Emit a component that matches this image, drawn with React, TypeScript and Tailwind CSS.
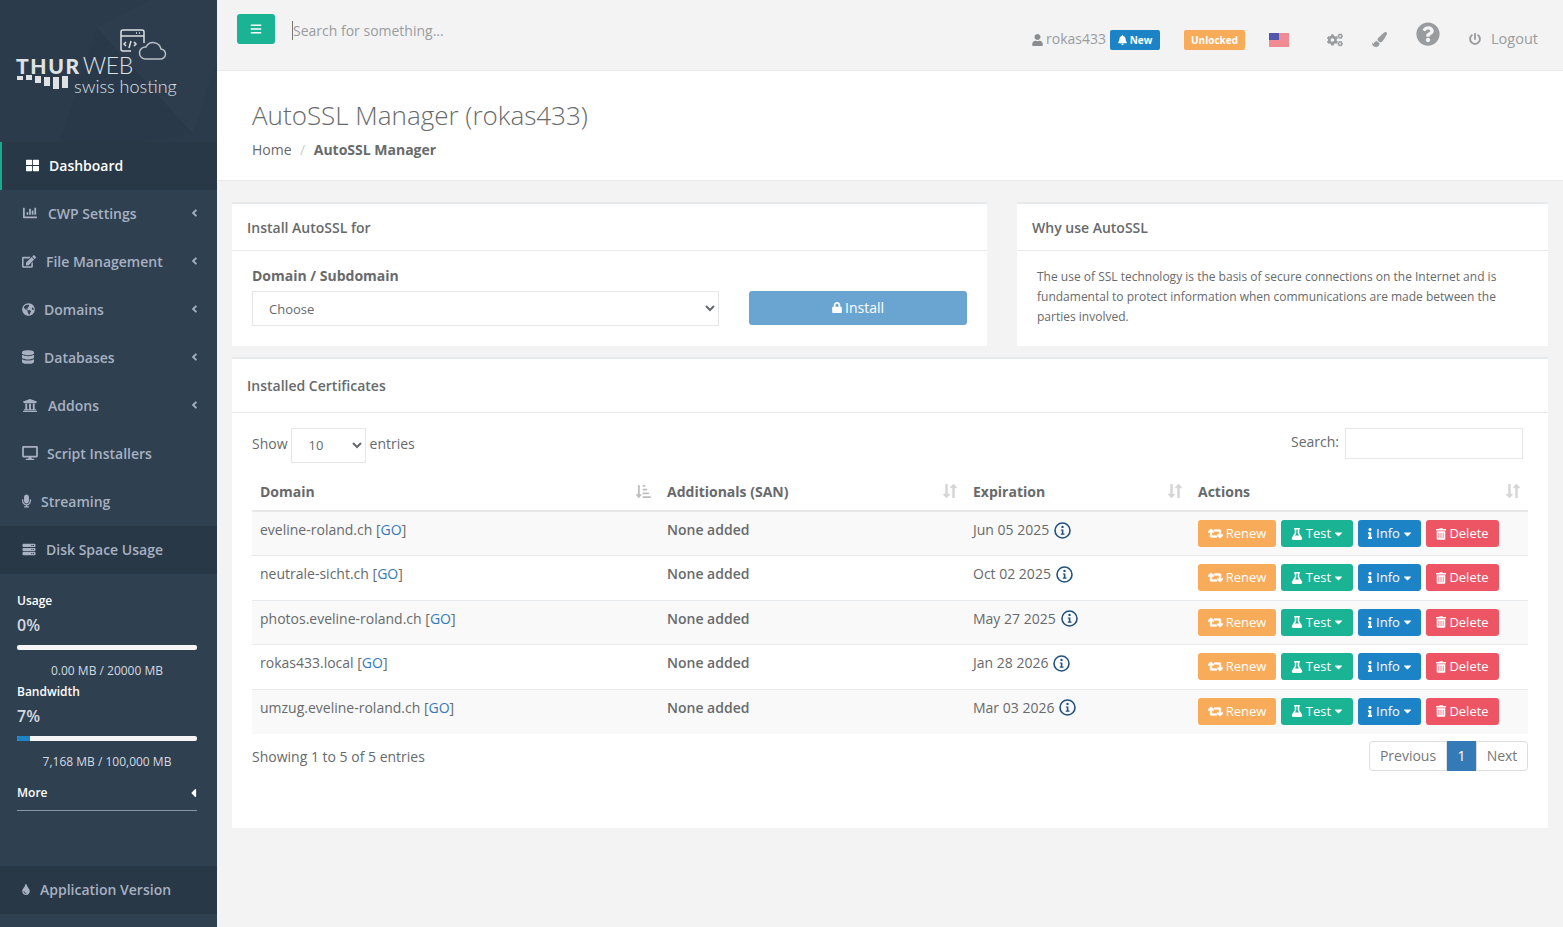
import {
  FaAngleLeft, FaBars, FaBell, FaChartBar, FaCogs, FaDatabase, FaDesktop, FaEdit, FaFlask, FaGlobeAmericas,
  FaInfo, FaLock, FaLongArrowAltDown, FaLongArrowAltUp, FaMicrophone, FaPaintBrush, FaPowerOff, FaQuestionCircle,
  FaRetweet, FaServer, FaSortAmountDownAlt, FaThLarge, FaTint, FaTrashAlt, FaUniversity, FaUser, FaCaretDown, FaCaretLeft,
} from "react-icons/fa";

const menu = [
  { label: "CWP Settings", icon: FaChartBar, size: "w-[16px] h-[14px]", gap: "gap-[10px]", arrow: true },
  { label: "File Management", icon: FaEdit, size: "w-[14px] h-[13px]", gap: "gap-[10px]", arrow: true },
  { label: "Domains", icon: FaGlobeAmericas, size: "w-[13px] h-[13px]", gap: "gap-[9px]", arrow: true },
  { label: "Databases", icon: FaDatabase, size: "w-[12px] h-[14px]", gap: "gap-[10px]", arrow: true },
  { label: "Addons", icon: FaUniversity, size: "w-[16px] h-[15px]", gap: "gap-[10px]", arrow: true },
  { label: "Script Installers", icon: FaDesktop, size: "w-[16px] h-[14px]", gap: "gap-[9px]", arrow: false },
  { label: "Streaming", icon: FaMicrophone, size: "w-[9px] h-[14px]", gap: "gap-[10px]", arrow: false },
];

const rows = [
  { domain: "eveline-roland.ch", expires: "Jun 05 2025" },
  { domain: "neutrale-sicht.ch", expires: "Oct 02 2025" },
  { domain: "photos.eveline-roland.ch", expires: "May 27 2025" },
  { domain: "rokas433.local", expires: "Jan 28 2026" },
  { domain: "umzug.eveline-roland.ch", expires: "Mar 03 2026" },
];

function Logo() {
  return (
    <div className="relative h-[142px] bg-[#2b3b4b] overflow-hidden shrink-0">
      <svg className="absolute inset-0" width="217" height="142" viewBox="0 0 217 142">
        <path d="M97 28L150 0H217V60L193 134L140 100Z" fill="#2d3d4d" />
        <path d="M97 28L193 134L140 142H60Z" fill="#293949" />
      </svg>
      <svg className="absolute left-[119px] top-[29px]" width="50" height="33" viewBox="0 0 50 33" fill="none" stroke="#dcdfe2" strokeWidth="1.5">
        <path d="M12 22H4a2 2 0 0 1-2-2V3a2 2 0 0 1 2-2h19a2 2 0 0 1 2 2v11" />
        <path d="M2 7h23" />
        <path d="M17 4h1M20 4h1M23 4h0" />
        <path d="M7 13l-2 2 2 2M15 13l2 2-2 2M12 12l-2 7" />
        <path d="M26 30h15a5 5 0 0 0 1-10 8 8 0 0 0-15-2 6 6 0 0 0-1 12z" stroke="#b9bfc5" />
      </svg>
      <div className="absolute left-[16px] top-[51px] flex items-baseline font-['Lato',sans-serif] leading-[28px]">
        <span className="text-[21px] font-black text-[#dfe2e5] tracking-[1.6px]">THUR</span>
        <span className="ml-[2px] text-[23px] font-light text-[#dfe2e5] tracking-[-0.3px]">WEB</span>
      </div>
      <div className="absolute left-[17px] top-[76px] flex items-start gap-[3px]">
        <i className="block w-[6px] h-[4px] bg-[#dfe2e5]" />
        <i className="block w-[6px] h-[5px] bg-[#dfe2e5] mt-[-1px]" />
        <i className="block w-[6px] h-[7px] bg-[#dfe2e5]" />
        <i className="block w-[6px] h-[9px] bg-[#dfe2e5] mt-[1px]" />
        <i className="block w-[6px] h-[12px] bg-[#dfe2e5] mt-[1px]" />
        <i className="block w-[6px] h-[12px] bg-[#dfe2e5]" />
      </div>
      <div className="absolute left-[74px] top-[74px] text-[18px] leading-[24px] font-light text-[#dfe2e5] font-['Lato',sans-serif]">swiss hosting</div>
    </div>
  );
}

function Sidebar() {
  return (
    <aside className="w-[217px] shrink-0 bg-[#2f4050] flex flex-col h-[927px] font-semibold text-[14px] text-[#a7b1c2]">
      <Logo />
      <div className="h-[48px] pb-[2px] bg-[#293846] border-l-[2px] border-[#19aa8d] flex items-center gap-[10px] pl-[24px] text-white">
        <FaThLarge className="w-[13px] h-[13px]" />
        <span>Dashboard</span>
      </div>
      {menu.map((m) => (
        <div key={m.label} className={`h-[48px] pb-[2px] flex items-center pl-[22px] pr-[19px] ${m.gap}`}>
          <m.icon className={`${m.size} shrink-0`} />
          <span className="flex-1">{m.label}</span>
          {m.arrow && <FaAngleLeft className="w-[7px] h-[12px]" />}
        </div>
      ))}
      <div className="h-[48px] pb-[2px] bg-[#293846] flex items-center gap-[10px] pl-[22px]">
        <FaServer className="w-[14px] h-[13px]" />
        <span>Disk Space Usage</span>
      </div>
      <div className="pl-[17px] pr-[20px] pt-[18px] flex-1 text-[12px] font-normal text-[#d5dae1]">
        <div className="text-white font-semibold leading-[17px]">Usage</div>
        <div className="mt-[5px] text-[16px] font-semibold leading-[22px] text-[#d5dae1]">0%</div>
        <div className="mt-[9px] h-[5px] rounded-[2px] bg-[#f5f5f5]" />
        <div className="mt-[12px] text-center leading-[17px]">0.00 MB / 20000 MB</div>
        <div className="mt-[4px] text-white font-semibold leading-[17px]">Bandwidth</div>
        <div className="mt-[5px] text-[16px] font-semibold leading-[22px]">7%</div>
        <div className="mt-[9px] h-[5px] rounded-[2px] bg-[#f5f5f5] overflow-hidden">
          <div className="h-full bg-[#1c84c6]" style={{ width: "7%" }} />
        </div>
        <div className="mt-[12px] text-center leading-[17px]">7,168 MB / 100,000 MB</div>
        <div className="mt-[14px] pb-[9px] flex items-center justify-between border-b border-[#8c97a3] text-white font-semibold leading-[17px]">
          <span>More</span>
          <FaCaretLeft className="w-[7px] h-[14px]" />
        </div>
      </div>
      <div className="h-[48px] pb-[2px] bg-[#293846] flex items-center gap-[9px] pl-[21px] mb-[13px]">
        <FaTint className="w-[10px] h-[11px]" />
        <span>Application Version</span>
      </div>
    </aside>
  );
}

function Topbar() {
  return (
    <header className="h-[71px] shrink-0 bg-[#f3f3f4] border-b border-[#e7eaec] flex pl-[20px] pr-[25px] text-[#999c9e]">
      <button className="mt-[14px] w-[38px] h-[30px] rounded-[3px] bg-[#1ab394] text-white flex items-center justify-center">
        <FaBars className="w-[12px] h-[12px]" />
      </button>
      <div className="mt-[21px] ml-[17px] h-[19px] w-px bg-[#777]" />
      <input className="ml-0 h-[60px] w-[400px] bg-transparent outline-none text-[14px] placeholder:text-[#999c9e]" placeholder="Search for something..." />
      <div className="ml-auto flex items-start text-[14px]">
        <div className="mt-[30px] flex items-center">
          <FaUser className="w-[11px] h-[12px] mr-[3px] text-[#8a8d90]" />
          <span className="leading-[18px] pb-[2px]">rokas433</span>
          <span className="ml-[4px] h-[20px] w-[50px] rounded-[2px] bg-[#1c84c6] text-white text-[10px] font-bold flex items-center justify-center gap-[3px]">
            <FaBell className="w-[9px] h-[10px]" />New
          </span>
        </div>
        <span className="mt-[30px] ml-[24px] h-[20px] w-[61px] rounded-[2px] bg-[#f8ac59] text-white text-[10px] font-bold flex items-center justify-center">Unlocked</span>
        <svg className="mt-[33px] ml-[24px]" width="20" height="14" viewBox="0 0 20 14">
          <rect width="20" height="14" fill="#f6d9dc" />
          <path d="M0 1h20M0 3h20M0 5h20M0 7h20M0 9h20M0 11h20M0 13h20" stroke="#ea3f4d" strokeWidth="1.2" />
          <rect width="10" height="7" fill="#5257ad" />
        </svg>
        <FaCogs className="mt-[33px] ml-[38px] w-[16px] h-[14px] text-[#999c9e]" />
        <FaPaintBrush className="mt-[32px] ml-[29px] w-[15px] h-[15px] text-[#999c9e]" />
        <FaQuestionCircle className="mt-[22px] ml-[29px] w-[24px] h-[24px] text-[#999c9e]" />
        <div className="mt-[30px] ml-[29px] flex items-center gap-[10px] leading-[18px] text-[14.5px]">
          <FaPowerOff className="w-[12px] h-[12px]" />
          <span>Logout</span>
        </div>
      </div>
    </header>
  );
}

function SortIcon() {
  return (
    <span className="flex text-[#d6d6d6] -mr-[1px]">
      <FaLongArrowAltDown className="w-[9px] h-[16px]" />
      <FaLongArrowAltUp className="w-[9px] h-[16px] -ml-[2px]" />
    </span>
  );
}

function InfoMark() {
  return (
    <svg width="17" height="17" viewBox="0 0 17 17" fill="none">
      <circle cx="8.5" cy="8.5" r="7.5" stroke="#23527c" strokeWidth="1.6" />
      <circle cx="8.5" cy="4.9" r="1.2" fill="#23527c" />
      <path d="M6.8 7.4h2.6v4.2h1.1v1.1H6.8v-1.1h1v-3.1h-1z" fill="#23527c" />
    </svg>
  );
}

function Btn({ color, width, children }: { color: string; width: string; children: React.ReactNode }) {
  return (
    <button className={`h-[27px] ${width} ${color} rounded-[3px] text-white text-[13px] flex items-center justify-center gap-[3px] shrink-0`}>
      {children}
    </button>
  );
}

function CertTable() {
  return (
    <table className="w-[1276px] table-fixed text-[14px] border-collapse">
      <colgroup>
        <col className="w-[407px]" />
        <col className="w-[306px]" />
        <col className="w-[225px]" />
        <col className="w-[338px]" />
      </colgroup>
      <thead>
        <tr className="h-[35px] border-b-2 border-[#e7e7e7] text-left">
          {["Domain", "Additionals (SAN)", "Expiration", "Actions"].map((h, i) => (
            <th key={h} className="px-[8px] pb-[4px] font-bold">
              <div className="flex items-center justify-between">
                <span>{h}</span>
                {i === 0 ? <FaSortAmountDownAlt className="w-[15px] h-[15px] text-[#bdbdbd]" /> : <SortIcon />}
              </div>
            </th>
          ))}
        </tr>
      </thead>
      <tbody>
        {rows.map((r, i) => (
          <tr key={r.domain} className={`h-[44.5px] align-top border-b border-[#e7eaec] last:border-b-0 ${i % 2 === 0 ? "bg-[#f9f9f9]" : "bg-white"}`}>
            <td className="px-[8px] pt-[8px] leading-[20px]">
              {r.domain} <span>[<span className="text-[#337ab7]">GO</span>]</span>
            </td>
            <td className="px-[8px] pt-[8px] leading-[20px] font-semibold">None added</td>
            <td className="px-[8px] pt-[8px] leading-[20px]">
              <span className="flex items-center gap-[5px]">
                {r.expires}
                <InfoMark />
              </span>
            </td>
            <td className="px-[8px] pt-[8.4px]">
              <div className="flex gap-[5px]">
                <Btn color="bg-[#f8ac59]" width="w-[78px]">
                  <FaRetweet className="w-[15px] h-[13px]" stroke="currentColor" strokeWidth={30} /> Renew
                </Btn>
                <Btn color="bg-[#1ab394]" width="w-[72px]">
                  <FaFlask className="w-[12px] h-[12px]" /> Test <FaCaretDown className="w-[9px] h-[12px]" />
                </Btn>
                <Btn color="bg-[#1c84c6]" width="w-[63px]">
                  <FaInfo className="w-[6px] h-[11px]" /> Info <FaCaretDown className="w-[9px] h-[12px]" />
                </Btn>
                <Btn color="bg-[#ed5565]" width="w-[73px]">
                  <FaTrashAlt className="w-[10px] h-[12px]" /> Delete
                </Btn>
              </div>
            </td>
          </tr>
        ))}
      </tbody>
    </table>
  );
}

export default function App() {
  return (
    <div className="flex h-[927px] overflow-hidden bg-[#f3f3f4] font-['Open_Sans',sans-serif] text-[#676a6c]">
      <Sidebar />
      <main className="flex-1 min-w-0 flex flex-col">
        <Topbar />
        <section className="h-[110px] shrink-0 bg-white border-b border-[#e7eaec] pl-[35px] pt-[26px]">
          <h1 className="text-[26px] font-light leading-[36px]">AutoSSL Manager (rokas433)</h1>
          <div className="mt-[7px] text-[14px] leading-[20px]">
            <span>Home</span>
            <span className="mx-[8.5px] text-[#ccc]">/</span>
            <span className="font-bold">AutoSSL Manager</span>
          </div>
        </section>

        <div className="px-[15px] pt-[21px]">
          <div className="flex gap-[30px]">
            <div className="w-[755px] h-[144px] bg-white border-t-2 border-[#e7eaec]">
              <div className="h-[47px] border-b border-[#e7eaec] px-[15px] flex items-center text-[14px] font-semibold">Install AutoSSL for</div>
              <div className="pl-[20px] pr-[20px] pt-[15px] flex items-end gap-[30px]">
                <div className="w-[467px]">
                  <div className="text-[14px] font-bold leading-[20px] mb-[5px]">Domain / Subdomain</div>
                  <select className="w-full h-[35px] bg-white border border-[#e5e6e7] pl-[12px] text-[13px] outline-none">
                    <option>Choose</option>
                  </select>
                </div>
                <button className="w-[218px] h-[34px] mb-[1px] pb-[2px] rounded-[3px] bg-[#6aa5d2] text-white text-[14px] flex items-center justify-center gap-[3px]">
                  <FaLock className="w-[10px] h-[11px]" /> Install
                </button>
              </div>
            </div>
            <div className="w-[531px] h-[144px] bg-white border-t-2 border-[#e7eaec]">
              <div className="h-[47px] border-b border-[#e7eaec] px-[15px] flex items-center text-[14px] font-semibold">Why use AutoSSL</div>
              <p className="pl-[20px] pr-[30px] pt-[16px] text-[12px] leading-[20px]">
                The use of SSL technology is the basis of secure connections on the Internet and is fundamental to protect information when communications are made between the parties involved.
              </p>
            </div>
          </div>

          <div className="mt-[11px] h-[471px] bg-white border-t-2 border-[#e7eaec]">
            <div className="h-[54px] pb-[1px] border-b border-[#e7eaec] px-[15px] flex items-center text-[14px] font-semibold">Installed Certificates</div>
            <div className="px-[20px] pt-[15px]">
              <div className="flex justify-between items-start h-[48px] pr-[5px] text-[14px]">
                <div className="flex items-center gap-[3px]">
                  <span className="pb-[4px]">Show</span>
                  <select className="w-[75px] h-[35px] bg-white border border-[#e5e6e7] pl-[13px] pb-[2px] text-[13px] outline-none">
                    <option>10</option>
                  </select>
                  <span className="pb-[4px] ml-[1px]">entries</span>
                </div>
                <div className="flex items-center gap-[6px]">
                  <span className="pb-[4px]">Search:</span>
                  <input className="w-[178px] h-[31px] border border-[#e5e6e7] outline-none" />
                </div>
              </div>
              <CertTable />
              <div className="mt-[7px] flex items-center justify-between text-[14px]">
                <span className="pt-[2px]">Showing 1 to 5 of 5 entries</span>
                <div className="flex h-[30px] items-stretch">
                  <span className="w-[78px] border border-[#ddd] rounded-l-[4px] flex items-center justify-center text-[#777]">Previous</span>
                  <span className="w-[29px] bg-[#337ab7] text-white flex items-center justify-center">1</span>
                  <span className="w-[52px] border border-[#ddd] rounded-r-[4px] flex items-center justify-center text-[#777]">Next</span>
                </div>
              </div>
            </div>
          </div>
        </div>
      </main>
    </div>
  );
}
